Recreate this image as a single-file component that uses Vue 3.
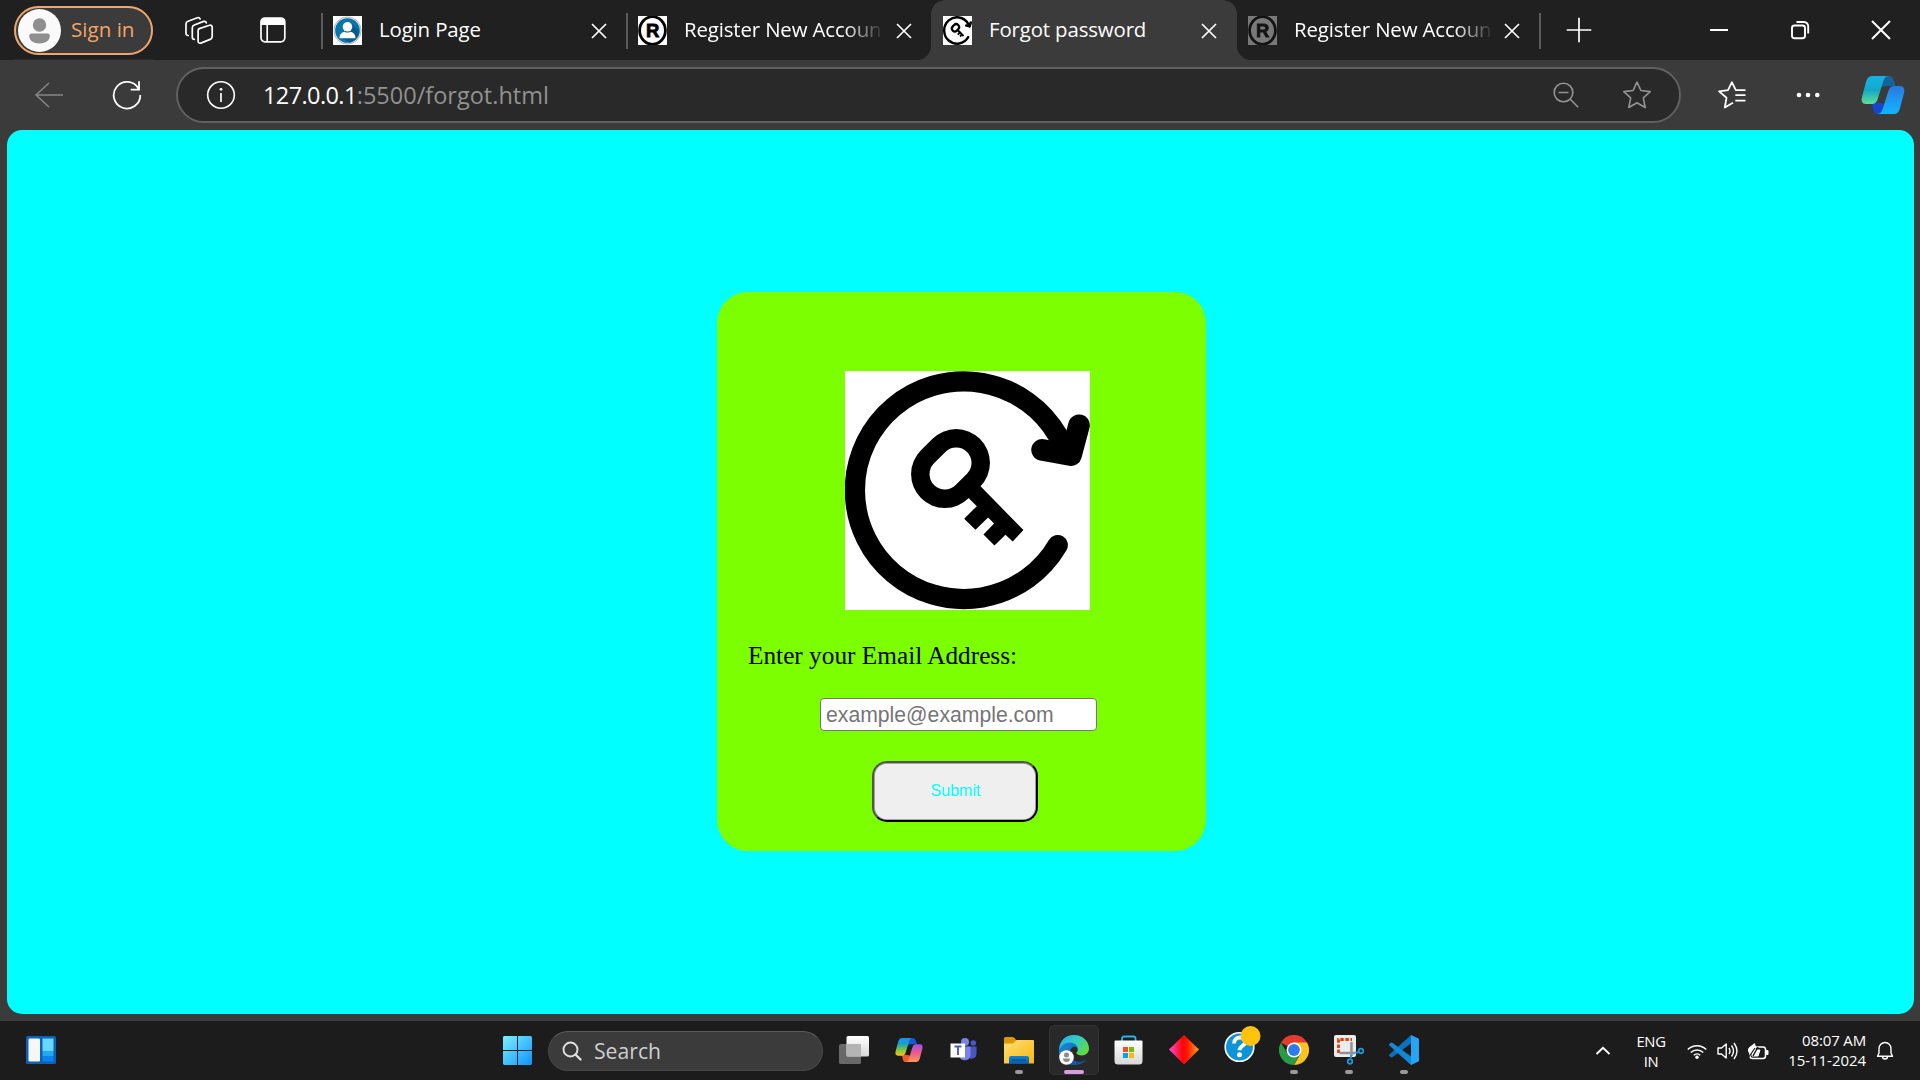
<script setup>
const tabs = [
  { title: 'Login Page', icon: 'user' },
  { title: 'Register New Accoun', icon: 'reg' },
  { title: 'Forgot password', icon: 'key', active: true },
  { title: 'Register New Accoun', icon: 'reg', dim: true },
]
</script>

<template>
  <div class="screen">
    <svg class="defs" width="0" height="0">
      <defs>
        <symbol id="key" viewBox="434 273 736 718" preserveAspectRatio="none">
          <rect x="434" y="273" width="736" height="718" fill="#fff" />
          <path d="M1108 524L1073 466A327 327 0 1 0 1073 796" fill="none" stroke="#000" stroke-width="61" stroke-linecap="round" />
          <path d="M1137 436L1113 526L1026 510" fill="none" stroke="#000" stroke-width="65" stroke-linecap="round" stroke-linejoin="round" />
          <path d="M768 549L734 583" stroke="#000" stroke-width="203" stroke-linecap="round" />
          <path d="M842 620L970 751L938 785L916 765L883 797L850 764L882 731L864 713L826 750L792 717L830 679L806 655L780 640L820 600Z" />
          <path d="M768 549L734 583" stroke="#fff" stroke-width="92" stroke-linecap="round" />
        </symbol>
        <symbol id="reg" viewBox="0 0 29 29">
          <rect width="29" height="29" fill="#fff" />
          <ellipse cx="14.5" cy="14.5" rx="12.9" ry="13.8" fill="#fff" stroke="#000" stroke-width="2.8" />
          <text x="14.6" y="21.2" text-anchor="middle" font-family="Liberation Sans, sans-serif" font-weight="bold" font-size="18.5" stroke="#000" stroke-width=".8">R</text>
        </symbol>
        <symbol id="user" viewBox="0 0 29 29">
          <rect width="29" height="29" fill="#fff" />
          <circle cx="14.5" cy="14.5" r="13.6" fill="#dfe3e6" stroke="#a9adb0" stroke-width=".8" />
          <circle cx="14.5" cy="14.5" r="12.3" fill="#0676ad" />
          <path d="M18 7L26.3 15.5A12.3 12.3 0 0 1 17 26.500L7 21Z" fill="#075b8c" />
          <circle cx="14.5" cy="10.8" r="4.8" fill="#fff" />
          <path d="M6.500 22.300c0-5 3-6 5-6.600q3 1.700 6 0c2 .6 5 1.600 5 6.600z" fill="#fff" />
        </symbol>
        <linearGradient id="cpA" x1="0" y1="0" x2="0" y2="1"><stop offset="0" stop-color="#17b1e6" /><stop offset=".5" stop-color="#12a9c8" /><stop offset="1" stop-color="#5fdf92" /></linearGradient>
        <linearGradient id="cpB" x1="0" y1="0" x2="0" y2="1"><stop offset="0" stop-color="#2a78e0" /><stop offset="1" stop-color="#12b5ff" /></linearGradient>
        <linearGradient id="cpC" x1="0" y1="0" x2="0" y2="1"><stop offset="0" stop-color="#1e8df5" /><stop offset=".35" stop-color="#15a5c0" /><stop offset=".65" stop-color="#7cc24a" /><stop offset="1" stop-color="#f5c90c" /></linearGradient>
        <linearGradient id="cpD" x1="0" y1="0" x2="0" y2="1"><stop offset="0" stop-color="#a34ee8" /><stop offset=".5" stop-color="#ef5a8c" /><stop offset="1" stop-color="#ff9a55" /></linearGradient>
        <linearGradient id="win" gradientUnits="userSpaceOnUse" x1="0" y1="0" x2="29" y2="29"><stop offset="0" stop-color="#7df0ff" /><stop offset="1" stop-color="#0a94ff" /></linearGradient>
        <linearGradient id="fold" x1="0" y1="0" x2="1" y2="1"><stop offset="0" stop-color="#ffe07a" /><stop offset="1" stop-color="#f9b60d" /></linearGradient>
        <linearGradient id="blue" x1="0" y1="0" x2="0" y2="1"><stop offset="0" stop-color="#1583d6" /><stop offset="1" stop-color="#0b57a3" /></linearGradient>
        <linearGradient id="edgeA" x1="0" y1="0" x2="1" y2=".6"><stop offset="0" stop-color="#2ba9e8" /><stop offset=".5" stop-color="#31c8cc" /><stop offset="1" stop-color="#5edb45" /></linearGradient>
        <linearGradient id="edgeB" x1="0" y1="0" x2="1" y2="1"><stop offset="0" stop-color="#1c8de0" /><stop offset="1" stop-color="#0a4a94" /></linearGradient>
        <linearGradient id="dia" x1="0" y1="0" x2="1" y2="0"><stop offset="0" stop-color="#ff4fd8" /><stop offset=".45" stop-color="#ff0505" /><stop offset=".6" stop-color="#ff1500" /><stop offset="1" stop-color="#ffa51c" /></linearGradient>
        <linearGradient id="grey" x1="0" y1="0" x2="0" y2="1"><stop offset="0" stop-color="#fff" /><stop offset="1" stop-color="#d8d8d8" /></linearGradient>
      </defs>
    </svg>

    <header class="tabbar">
      <div class="signin">
        <svg width="43" height="43" viewBox="0 0 43 43"><circle cx="21.500" cy="21.500" r="21.500" fill="#fafafa" /><circle cx="21.500" cy="16" r="6.700" fill="#8f8f8f" /><path d="M13.500 24.400h16a2.300 2.300 0 0 1 2.300 2.300c0 5-4.600 7.700-10.300 7.700s-10.300-2.700-10.300-7.700a2.300 2.300 0 0 1 2.300-2.300z" fill="#8f8f8f" /></svg>
        <span>Sign in</span>
      </div>
      <svg class="spaces" width="30" height="30" viewBox="0 0 30 30" fill="none" stroke="#fff" stroke-width="1.700" stroke-linejoin="round" stroke-linecap="round">
        <path d="M15.300 13.600l10.200-3.400a2 2 0 0 1 2.700 1.900v9.500a3 3 0 0 1-2 2.800l-9.400 3.700a2 2 0 0 1-2.700-1.900V15.600a2 2 0 0 1 1.200-2z" />
        <path d="M10.300 24.300a2 2 0 0 1-2-2v-9.500a3 3 0 0 1 2-2.800l9.400-3.600a2 2 0 0 1 2.600 1.500" />
        <path d="M4.200 20.500a2 2 0 0 1-2.200-2V9.100a3 3 0 0 1 2-2.800l9.400-3.600a2 2 0 0 1 2.700 1.200" />
      </svg>
      <svg class="vtabs" width="26" height="26" viewBox="0 0 26 26"><rect x="1" y="1" width="23.800" height="23.800" rx="4" fill="none" stroke="#fff" stroke-width="1.700" /><path d="M1 8V5a4 4 0 0 1 4-4h15.800a4 4 0 0 1 4 4v3z" fill="#fff" /><path d="M7.200 8v17" stroke="#fff" stroke-width="1.700" /></svg>

      <div class="tabs">
        <div v-for="(t, i) in tabs" :key="i" class="tab" :class="{ active: t.active, sep: i < 2, before: i === 1, after: i === 3 }">
          <svg class="fav" :class="{ dim: t.dim }" width="29" height="29"><use :href="'#' + t.icon" /></svg>
          <span class="title" :class="{ fade: t.icon === 'reg' }">{{ t.title }}</span>
          <svg class="x" width="16" height="16" viewBox="0 0 16 16"><path d="M1 1l14 14M15 1L1 15" stroke="#fff" stroke-width="1.700" /></svg>
        </div>
        <div class="newtab">
          <svg width="26" height="26" viewBox="0 0 26 26"><path d="M13 .7v24.600M.7 13h24.600" stroke="#fff" stroke-width="1.700" /></svg>
        </div>
      </div>

      <div class="winctl">
        <svg width="20" height="20" viewBox="0 0 20 20"><path d="M1 10h18" stroke="#fff" stroke-width="2" /></svg>
        <svg width="20" height="20" viewBox="0 0 20 20" fill="none" stroke="#fff" stroke-width="1.900"><rect x="2" y="5.500" width="13" height="12.700" rx="2.500" /><path d="M6.500 2H14a4.200 4.200 0 0 1 4.200 4.200v7.300" /></svg>
        <svg width="20" height="20" viewBox="0 0 20 20"><path d="M1 1l18 18M19 1L1 19" stroke="#fff" stroke-width="2" /></svg>
      </div>
    </header>

    <div class="toolbar">
      <svg width="30" height="28" viewBox="0 0 30 28" fill="none" stroke="#868686" stroke-width="1.500"><path d="M29 14H2M15 2L2 14l13 12" /></svg>
      <svg class="reload" width="30" height="30" viewBox="0 0 30 30" fill="none" stroke="#fff" stroke-width="1.800"><path d="M26.500 8.500A13.300 13.300 0 1 0 28.300 15M27 1.300v8.300h-8.300" /></svg>
      <div class="url">
        <svg width="30" height="30" viewBox="0 0 30 30"><circle cx="15" cy="15" r="13.300" fill="none" stroke="#fff" stroke-width="1.600" /><circle cx="15" cy="9.300" r="1.400" fill="#fff" /><path d="M15 13v9" stroke="#fff" stroke-width="1.700" /></svg>
        <span class="addr"><b>127.0.0.1</b><i>:5500/forgot.html</i></span>
        <svg class="zoomout" width="26" height="26" viewBox="0 0 26 26" fill="none" stroke="#939393" stroke-width="1.600"><circle cx="10.500" cy="10.500" r="9.300" /><path d="M5.500 10.500h10M17.200 17.200l8 8" /></svg>
        <svg width="30" height="30" viewBox="0 0 30 30" fill="none" stroke="#939393" stroke-width="1.600" stroke-linejoin="round"><path d="M15 2.200l3.900 8.300 9.300 1.100-6.900 6.200 1.900 9.700-8.200-4.700-8.200 4.700 1.900-9.700L1.800 11.600l9.300-1.100z" /></svg>
      </div>
      <svg class="favs" width="30" height="30" viewBox="0 0 30 30" fill="none" stroke="#fff" stroke-width="1.800" stroke-linejoin="round"><path d="M16 22.700l-8.200 4.800 1.700-9.700-7.400-6.400 8.900-1.200 3.900-8 3.900 8H28M18.300 15.200H28.500M18.300 20.600H28.500M18.300 10.200H28.500" /></svg>
      <svg class="dots" width="26" height="8" viewBox="0 0 26 8" fill="#fff"><circle cx="4" cy="4" r="2.300" /><circle cx="13" cy="4" r="2.300" /><circle cx="22.300" cy="4" r="2.300" /></svg>
      <svg class="copilot" width="44" height="40" viewBox="0 0 44 40">
        <path d="M21 1h6c4 0 5 2 6 5l1.500 5H25l-6 1z" fill="#14649c" />
        <path d="M11 28h9l5 2-4 9h-4c-3 0-4-2-5-5z" fill="#1745cf" />
        <path d="M11 1h17c-4 0-5 3-6 6l-5 16c-1 4-3 6-6 6H5c-4 0-5-3-4-7L5 7c1-4 3-6 6-6z" fill="url(#cpA)" />
        <path d="M33 39H16c4 0 5-3 6-6l5-16c1-4 3-6 6-6h6c4 0 5 3 4 7l-4 15c-1 4-3 6-6 6z" fill="url(#cpB)" />
      </svg>
    </div>

    <main class="viewport">
      <form class="card" @submit.prevent>
        <svg class="hero" width="245" height="239"><use href="#key" /></svg>
        <label for="email">Enter your Email Address:</label>
        <input id="email" type="email" placeholder="example@example.com" />
        <button type="submit">Submit</button>
      </form>
    </main>

    <footer class="taskbar">
      <svg class="widgets" width="30" height="28" viewBox="0 0 30 28"><rect width="30" height="28" rx="1.500" fill="#0d62b8" /><rect x="2.500" y="2.500" width="11.500" height="23" rx="1.200" fill="#f7f7f7" /><path d="M16.500 2.500h11V15h-11z" fill="#68d7ff" /><path d="M16.500 15h11v5h-11z" fill="#22a7f5" /><path d="M16.500 20h11v5.500h-11z" fill="#0a83ea" /></svg>
      <svg class="start" width="29" height="29" viewBox="0 0 29 29" fill="url(#win)"><path d="M1 0h13v14H0V1zM15 0h13l1 1v13H15zM0 15h14v14H1l-1-1zM15 15h14v13l-1 1H15z" /></svg>
      <div class="search">
        <svg width="20" height="20" viewBox="0 0 20 20" fill="none" stroke="#e0e0e0"><circle cx="8.500" cy="8.500" r="7" stroke-width="1.900" /><path d="M13.500 13.500l5 5" stroke-width="2.400" stroke-linecap="round" /></svg>
        <span>Search</span>
      </div>
      <div class="apps">
        <div class="app"><svg width="30" height="28" viewBox="0 0 30 28"><rect x="0" y="8" width="22" height="20" rx="1.500" fill="#686868" /><rect x="7.500" y="0" width="22.500" height="20.500" rx="1.500" fill="url(#grey)" /><path d="M7.500 8H22v12.500H9a1.500 1.500 0 0 1-1.500-1.500z" fill="#b4b4b4" /></svg></div>
        <div class="app"><svg width="28" height="26" viewBox="0 0 44 40">
          <path d="M21 1h6c4 0 5 2 6 5l1.500 5H25l-6 1z" fill="#1458d6" />
          <path d="M11 28h9l5 2-4 9h-4c-3 0-4-2-5-5z" fill="#ec5c2c" />
          <path d="M11 1h17c-4 0-5 3-6 6l-5 16c-1 4-3 6-6 6H5c-4 0-5-3-4-7L5 7c1-4 3-6 6-6z" fill="url(#cpC)" />
          <path d="M33 39H16c4 0 5-3 6-6l5-16c1-4 3-6 6-6h6c4 0 5 3 4 7l-4 15c-1 4-3 6-6 6z" fill="url(#cpD)" />
        </svg></div>
        <div class="app"><svg width="28" height="26" viewBox="0 0 28 26"><circle cx="23.300" cy="6" r="2.800" fill="#4c55c4" /><path d="M17 9.500h9.500V17a4.800 4.800 0 0 1-8 3.500z" fill="#4c55c4" /><circle cx="15" cy="5" r="4" fill="#7a82ea" /><path d="M9 9.500h11.500V19a6 6 0 0 1-11.500 0z" fill="#7a82ea" /><path d="M.5 6.500H15v14H.5z" fill="#fff" /><path d="M4.500 9.500h7M8 9.500v8.500" stroke="#5059c9" stroke-width="1.900" /></svg></div>
        <div class="app run"><svg width="30" height="28" viewBox="0 0 30 28"><path d="M0 2.500A1.500 1.500 0 0 1 1.500 1H8q1.500 0 2.500 1l2 2.500V8H0z" fill="#d99a06" /><path d="M0 7.500h9l3.500-3.500H29a1 1 0 0 1 1 1v22.500H0z" fill="url(#fold)" /><path d="M5 28v-6a2 2 0 0 1 2-2h16a2 2 0 0 1 2 2v6z" fill="url(#blue)" /><path d="M8 24h14" stroke="#0a4b8c" stroke-width="1.200" /></svg></div>
        <div class="app current"><svg width="30" height="30" viewBox="0 0 30 30">
          <path d="M.2 16C-.5 6.500 6 0 15 0c8.500 0 15 6 15 13.500 0 4-3 7-7 7-3 0-5.500-1-5.500-2.500 0-1 1.300-1.300 1.300-3.500 0-2.500-2.600-5-6.300-5C7 9.500 2 11 .2 16z" fill="url(#edgeA)" />
          <path d="M0 16.500C1 10.500 6 7.600 11 7.600c4.500 0 7.800 3 7.800 6.400-1-2-3-2.500-4.500-2-3.500 1.300-4.500 6.300-2 10.500 3 5 9 5.500 15 2.300C24.500 28.500 20 30 15 30 6 30-.4 23.500 0 16.500z" fill="url(#edgeB)" />
          <circle cx="7.500" cy="22.500" r="7.300" fill="#fff" /><circle cx="7.500" cy="20" r="2.500" fill="#8b8b8b" /><path d="M4 23.500h7q0 3.500-3.500 3.500T4 23.500z" fill="#8b8b8b" />
        </svg></div>
        <div class="app"><svg width="30" height="30" viewBox="0 0 30 30"><path d="M8 7V3.500A2 2 0 0 1 10 1.500h9.500a2 2 0 0 1 2 2V7" fill="none" stroke="#27b4ee" stroke-width="1.800" /><path d="M1.500 5.500h26a1 1 0 0 1 1 1V26a3.500 3.500 0 0 1-3.500 3.500H4A3.500 3.500 0 0 1 .5 26V6.500a1 1 0 0 1 1-1z" fill="url(#grey)" /><path d="M9 12h5v5H9z" fill="#f25022" /><path d="M15 12h5v5h-5z" fill="#7fba00" /><path d="M9 18h5v5H9z" fill="#00a4ef" /><path d="M15 18h5v5h-5z" fill="#ffb900" /></svg></div>
        <div class="app dia"><svg width="30" height="30" viewBox="0 0 30 30"><path d="M15 0l15 14.500L15 29.500 0 14.500z" fill="url(#dia)" /></svg></div>
        <div class="app help"><svg width="38" height="38" viewBox="0 0 38 38"><circle cx="15.500" cy="21" r="14.300" fill="#0d93d6" stroke="#fff" stroke-width="1.600" /><path d="M10 17.500c0-8 12-7.500 11.500-1.500-.3 3.800-6 4-6 8.300" fill="none" stroke="#fff" stroke-width="3.800" /><circle cx="15.500" cy="28.800" r="2.500" fill="#fff" /><circle cx="26.500" cy="10" r="10" fill="#ffc20e" /></svg></div>
        <div class="app run"><svg width="30" height="30" viewBox="0 0 30 30"><path d="M15 15L2 7.500A15 15 0 0 1 28 7.500z" fill="#e33b2e" /><path d="M15 15V7.500h13A15 15 0 0 1 15 30l6.500-11.300z" fill="#fcc31e" /><path d="M15 15l6.500 3.800L15 30A15 15 0 0 1 2 7.500l6.500 11.300z" fill="#2a9a47" /><circle cx="15" cy="15" r="7.500" fill="#fff" /><circle cx="15" cy="15" r="5.900" fill="#2f7bec" /></svg></div>
        <div class="app run"><svg width="30" height="30" viewBox="0 0 30 30"><rect width="22" height="22" rx="2" fill="#ececec" /><path d="M4.500 18V4.500H18" fill="none" stroke="#d8420f" stroke-width="2.800" stroke-dasharray="3.400 1.700" /><path d="M5.500 18H21M17.500 7v14" stroke="#8d9499" stroke-width="2.500" /><path d="M17 20v3M21 17.500h3" stroke="#1e9be0" stroke-width="2" /><circle cx="16" cy="26.500" r="2.300" fill="none" stroke="#1e9be0" stroke-width="1.700" /><circle cx="27" cy="16" r="2.300" fill="none" stroke="#1e9be0" stroke-width="1.700" /></svg></div>
        <div class="app run"><svg width="30" height="30" viewBox="0 0 30 30"><path d="M22 0v8.500L3.300 22.300q-.8.500-1.500 0L.4 21q-.8-.8 0-1.600z" fill="#0b70bd" /><path d="M22 30v-8.500L3.300 7.700q-.8-.5-1.500 0L.4 9q-.8.800 0 1.600z" fill="#1089d8" /><path d="M22 0l7 3.300q1 .5 1 1.500v20.400q0 1-1 1.500L22 30z" fill="#26a3f1" /></svg></div>
      </div>
      <svg class="chev" width="16" height="10" viewBox="0 0 16 10"><path d="M1.500 8L8 1.700 14.500 8" fill="none" stroke="#fff" stroke-width="1.900" /></svg>
      <div class="lang"><span>ENG</span><span>IN</span></div>
      <div class="status">
        <svg width="20" height="18" viewBox="0 0 20 18" fill="none" stroke="#fff" stroke-width="1.500"><path d="M.8 7.500a13 13 0 0 1 18.400 0M3.800 10.500a8.800 8.800 0 0 1 12.400 0M6.800 13.300a4.600 4.600 0 0 1 6.400 0" /><circle cx="10" cy="15.300" r="1.700" fill="#fff" stroke="none" /></svg>
        <svg width="21" height="20" viewBox="0 0 21 20" fill="none" stroke="#fff" stroke-width="1.400" stroke-linejoin="round"><path d="M1 7h3.500l4.700-4v14l-4.700-4H1zM12 7q2 3 0 6M14.500 4.500q4 5.500 0 11M17 2q6 8 0 16" /></svg>
        <svg width="21" height="18" viewBox="0 0 21 18"><rect x="2" y="5" width="15.500" height="11.500" rx="2.500" fill="none" stroke="#fff" stroke-width="1.500" /><path d="M18.500 8.500h1.500v4h-1.500zM4 14V8h8l-2 6z" fill="#fff" stroke="#fff" /><path d="M0 8c0-3 3-3.500 6.500-7C9 5 8.500 11 4 12 1 12.300 0 10 0 8z" fill="#fff" /><path d="M.5 15.500L7 6" stroke="#1c1c1c" stroke-width="1.200" /><path d="M10 5L5 14" stroke="#1c1c1c" stroke-width="1.500" /></svg>
      </div>
      <div class="clock"><span class="time">08:07 AM</span><span class="date">15-11-2024</span></div>
      <svg class="bell" width="18" height="20" viewBox="0 0 18 20" fill="none" stroke="#fff" stroke-width="1.400" stroke-linejoin="round"><path d="M3 7.500a6 6 0 0 1 12 0V12l1.500 3.300H1.500L3 12zM6.500 15.500a2.500 2.500 0 0 0 5 0" /></svg>
    </footer>
  </div>
</template>

<style>
body {
  margin: 0;
  overflow: hidden;
}
</style>

<style scoped>
.screen {
  width: 1920px;
  height: 1080px;
  display: flex;
  flex-direction: column;
  overflow: hidden;
  background: #3b3b3b;
  color: #fff;
  font-family: "Open Sans", "Noto Sans", sans-serif;
}
.defs {
  position: absolute;
}
svg {
  flex: none;
  display: block;
}
.tabbar {
  height: 60px;
  flex: none;
  display: flex;
  align-items: center;
  background: #3b3b3b;
}
.tabbar::before {
  content: "";
  width: 14px;
  height: 60px;
  background: #202020;
}
.signin {
  width: 139px;
  height: 49px;
  box-sizing: border-box;
  border: 2px solid #f3a46a;
  border-radius: 25px;
  display: flex;
  align-items: center;
  gap: 10px;
  padding-left: 2px;
  color: #f3a46a;
  font-size: 20.6px;
  box-shadow: 0 0 0 30px #202020;
  clip-path: inset(-6px 0 -5px 0);
}
.signin span {
  position: relative;
  top: -1px;
}
.spaces,
.vtabs {
  box-sizing: content-box;
  background: #202020;
  padding: 15px 0;
}
.spaces {
  padding-left: 31px;
  padding-right: 46px;
}
.vtabs {
  padding: 17px 35px 17px 0;
}
.tabs {
  display: flex;
  height: 60px;
}
.tab {
  width: 305px;
  height: 60px;
  box-sizing: border-box;
  display: flex;
  align-items: center;
  padding-left: 12px;
  background: #202020;
  position: relative;
}
.tab.active {
  width: 306px;
  background: #3b3b3b;
}
.tab.active::before,
.tab.active::after {
  content: "";
  position: absolute;
  top: 0;
  width: 14px;
  height: 14px;
}
.tab.active::before {
  left: 0;
  background: radial-gradient(circle at 100% 100%, transparent 13.5px, #202020 14px);
}
.tab.active::after {
  right: 0;
  background: radial-gradient(circle at 0 100%, transparent 13.5px, #202020 14px);
}
.tab.before {
  border-bottom-right-radius: 14px;
}
.tab.after {
  width: 304px;
  padding-left: 11px;
  border-bottom-left-radius: 14px;
}
.tab.after .title {
  width: 196px;
}
.tab.sep::before {
  content: "";
  position: absolute;
  left: 0;
  top: 13px;
  width: 2px;
  height: 36px;
  background: #5c5c5c;
}
.fav.dim {
  opacity: 0.4;
}
.title {
  width: 198px;
  margin: 0 14px 2px 17px;
  font-size: 20.4px;
  letter-spacing: -0.13px;
  white-space: nowrap;
}
.title.fade {
  mask-image: linear-gradient(90deg, #000 160px, transparent 200px);
}
.x {
  margin-top: 2px;
}
.newtab {
  width: 120px;
  background: #202020;
  position: relative;
  padding: 17px 0 0 25px;
}
.newtab::before {
  content: "";
  position: absolute;
  left: -2px;
  top: 13px;
  width: 2px;
  height: 36px;
  background: #5c5c5c;
}
.winctl {
  flex: 1;
  height: 60px;
  display: flex;
  align-items: center;
  gap: 61px;
  padding-left: 23px;
  background: #202020;
}
.toolbar {
  height: 70px;
  flex: none;
  display: flex;
  align-items: center;
  padding-left: 34px;
}
.reload {
  margin-left: 48px;
}
.url {
  width: 1505px;
  flex: none;
  height: 56px;
  box-sizing: border-box;
  margin-left: 34px;
  border: 2px solid #606060;
  border-radius: 28px;
  background: #292929;
  display: flex;
  align-items: center;
  padding-left: 28px;
}
.addr {
  flex: 1;
  margin-left: 27px;
  font-size: 23.5px;
  letter-spacing: -0.6px;
}
.addr b {
  font-weight: 400;
}
.addr i {
  font-style: normal;
  letter-spacing: 0;
  color: #919191;
}
.zoomout {
  margin-right: 43px;
}
.zoomout + svg {
  margin-right: 27px;
}
.favs {
  margin-left: 36px;
}
.dots {
  margin-left: 48px;
}
.copilot {
  margin-left: 40px;
}
.viewport {
  height: 884px;
  flex: none;
  box-sizing: border-box;
  margin: 0 6px 7px 7px;
  padding: 162px 0 0 710px;
  border-radius: 15px;
  background: #00ffff;
}
.card {
  width: 489px;
  height: 559px;
  box-sizing: border-box;
  padding: 79px 32px 0;
  border-radius: 31px;
  background: #7cff00;
  display: flex;
  flex-direction: column;
  align-items: flex-start;
  color: #000;
}
.hero {
  margin-left: 96px;
}
label {
  margin: 30px 0 1px -1px;
  font: 25.3px/30px "Liberation Serif", serif;
}
input {
  width: 277px;
  height: 33px;
  box-sizing: border-box;
  margin: 27px 0 0 71px;
  border: 1px solid #767676;
  border-radius: 4px;
  padding: 0 5px;
  background: #fff;
  font: 21.2px "Liberation Sans", sans-serif;
}
input::placeholder {
  color: #757575;
}
button {
  width: 166px;
  height: 61px;
  box-sizing: border-box;
  margin: 30px 0 0 123px;
  padding: 0 0 2px 1px;
  border: 2px outset #000;
  border-radius: 15px;
  box-shadow: inset 0 0 0 0.8px #8c8c8c;
  background: #efefef;
  color: #00ffff;
  font: 16px "Liberation Sans", sans-serif;
}
.taskbar {
  height: 59px;
  flex: none;
  display: flex;
  align-items: center;
  background: #1c1c1c;
}
.widgets {
  margin: 0 0 1px 26px;
}
.start {
  margin-left: 447px;
}
.search {
  width: 275px;
  height: 40px;
  box-sizing: border-box;
  margin-left: 16px;
  border: 1px solid #484848;
  border-top-color: #5c5c5c;
  border-radius: 20px;
  background: #3b3b3b;
  display: flex;
  align-items: center;
  gap: 12px;
  padding-left: 13px;
  color: #cfcfcf;
  font-size: 21.2px;
}
.apps {
  display: flex;
  align-self: flex-start;
  margin-left: 3px;
}
.app {
  width: 55px;
  height: 58px;
  display: flex;
  align-items: center;
  justify-content: center;
  position: relative;
}
.app svg {
  position: relative;
}
.help svg {
  top: -5px;
  left: 4px;
}
.run::after,
.current::after {
  content: "";
  position: absolute;
  left: 24px;
  top: 49px;
  width: 8px;
  height: 4px;
  border-radius: 2px;
  background: #9a9a9a;
}
.current::after {
  left: 18px;
  width: 20px;
  background: #d79ce2;
}
.current::before {
  content: "";
  position: absolute;
  left: 3px;
  top: 4px;
  width: 48px;
  height: 48px;
  border: 1px solid #333;
  border-radius: 5px;
  background: #292929;
}
.chev {
  margin-left: 164px;
}
.lang {
  width: 40px;
  margin-left: 20px;
  display: flex;
  flex-direction: column;
  align-items: center;
  font-size: 14.8px;
  line-height: 20px;
  letter-spacing: -0.3px;
}
.status {
  display: flex;
  align-items: center;
  gap: 10px;
  margin-left: 16px;
}
.clock {
  width: 97px;
  display: flex;
  flex-direction: column;
  align-items: flex-end;
  font-size: 15px;
  line-height: 20px;
  margin-top: -2px;
  white-space: nowrap;
}
.time {
  letter-spacing: -0.15px;
}
.date {
  letter-spacing: -0.05px;
}
.bell {
  margin-left: 10px;
}
</style>
